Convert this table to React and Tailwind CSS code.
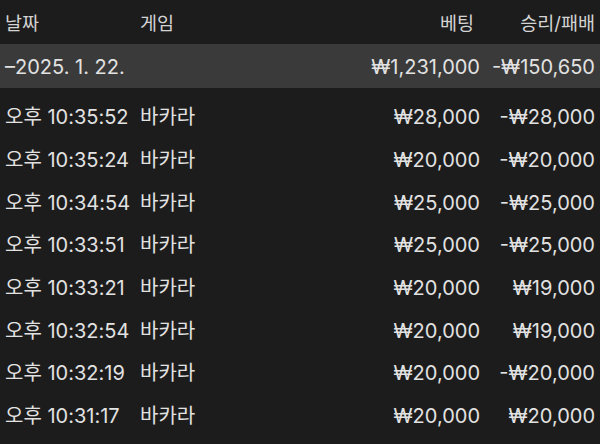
const rows = [
  ["오후 10:35:52", "바카라", "₩28,000", "-₩28,000"],
  ["오후 10:35:24", "바카라", "₩20,000", "-₩20,000"],
  ["오후 10:34:54", "바카라", "₩25,000", "-₩25,000"],
  ["오후 10:33:51", "바카라", "₩25,000", "-₩25,000"],
  ["오후 10:33:21", "바카라", "₩20,000", "₩19,000"],
  ["오후 10:32:54", "바카라", "₩20,000", "₩19,000"],
  ["오후 10:32:19", "바카라", "₩20,000", "-₩20,000"],
  ["오후 10:31:17", "바카라", "₩20,000", "₩20,000"],
];

export default function App() {
  return (
    <div
      className="w-[600px] h-[444px] overflow-hidden bg-[#1c1c1c] text-[#e2e2e2]"
      style={{ fontFamily: '"Inter", "Noto Sans CJK KR", sans-serif' }}
    >
      <div className="flex items-center h-[44px] pt-[4px] pl-[5px] pr-[5px] text-[18.5px] text-[#d4d4d4]">
        <div className="w-[135px]">날짜</div>
        <div className="flex-1">게임</div>
        <div className="w-[120px] text-right pr-[6px]">베팅</div>
        <div className="w-[115px] text-right">승리/패배</div>
      </div>
      <div className="flex items-center h-[44px] pt-[1px] pl-[5px] pr-[5px] text-[20px] bg-[#3a3a3a]">
        <div className="flex-1">–2025. 1. 22.</div>
        <div className="w-[120px] text-right">₩1,231,000</div>
        <div className="w-[115px] text-right">-₩150,650</div>
      </div>
      <div className="pt-[8px]">
        {rows.map((r, i) => (
          <div key={i} className="flex items-center h-[42.7px] pl-[5px] pr-[5px] text-[20px]">
            <div className="w-[135px] whitespace-nowrap">{r[0]}</div>
            <div className="flex-1">{r[1]}</div>
            <div className="w-[120px] text-right">{r[2]}</div>
            <div className="w-[115px] text-right">{r[3]}</div>
          </div>
        ))}
      </div>
    </div>
  );
}
